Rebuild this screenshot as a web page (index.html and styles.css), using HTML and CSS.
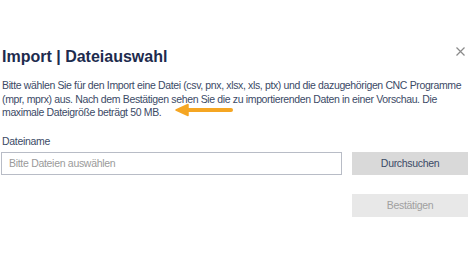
FILE: index.html
```html
<!DOCTYPE html>
<html lang="de">
<head>
<meta charset="utf-8">
<link rel="stylesheet" href="styles.css">
</head>
<body>
<div class="dialog">
  <div class="header">
    <h1 class="title">Import | Dateiauswahl</h1>
    <button class="close" aria-label="Schließen">
      <svg width="9" height="9" viewBox="0 0 9 9"><path d="M0.5 0.5L8.5 8.5M8.5 0.5L0.5 8.5" stroke="#8a8a8a" stroke-width="1.2" fill="none"/></svg>
    </button>
  </div>
  <p class="desc">Bitte wählen Sie für den Import eine Datei (csv, pnx, xlsx, xls, ptx) und die dazugehörigen CNC Programme (mpr, mprx) aus. Nach dem Bestätigen sehen Sie die zu importierenden Daten in einer Vorschau. Die maximale Dateigröße beträgt 50 MB.<span class="arrow"><svg width="60" height="14" viewBox="0 0 60 14"><path d="M56 7H10" stroke="#f5a623" stroke-width="4" stroke-linecap="round"/><path d="M1 7L13 1.5V12.5Z" fill="#f5a623" stroke="#f5a623" stroke-width="1.5" stroke-linejoin="round"/></svg></span></p>
  <label class="label" for="file">Dateiname</label>
  <div class="row">
    <input id="file" class="input" type="text" placeholder="Bitte Dateien auswählen">
    <button class="btn">Durchsuchen</button>
  </div>
  <div class="actions">
    <button class="btn disabled">Bestätigen</button>
  </div>
</div>
</body>
</html>
```
FILE: styles.css
```css
html, body {
  margin: 0;
  padding: 0;
  background: #ffffff;
}
body {
  font-family: "Liberation Sans", Arial, sans-serif;
  width: 470px;
  height: 264px;
  overflow: hidden;
}
.dialog {
  padding: 45px 2px 0 1px;
}
.header {
  display: flex;
  justify-content: space-between;
  align-items: flex-start;
}
.title {
  margin: 2px 0 0 1px;
  font-size: 16px;
  font-weight: bold;
  color: #1d2b4e;
  line-height: 20px;
}
.close {
  border: 0;
  background: none;
  padding: 0;
  margin: 2px 3px 0 0;
  width: 9px;
  height: 9px;
  display: flex;
}
.desc {
  margin: 12px 0 0 1px;
  font-size: 10.5px;
  line-height: 13.5px;
  letter-spacing: -0.36px;
  color: #3b4a66;
}
.arrow {
  position: relative;
}
.arrow svg {
  position: absolute;
  left: 14px;
  top: -3px;
}
.label {
  display: block;
  margin: 14px 0 0 1px;
  font-size: 10.5px;
  line-height: 14px;
  letter-spacing: -0.3px;
  color: #3b4a66;
}
.row {
  display: flex;
  gap: 10px;
  margin-top: 4px;
}
.input {
  box-sizing: border-box;
  width: 342px;
  height: 23px;
  border: 1px solid #b8bcc6;
  padding: 0 7px;
  font-family: inherit;
  font-size: 10.5px;
  letter-spacing: -0.3px;
  color: #333;
  margin: 0;
  outline: none;
}
.input::placeholder {
  color: #9a9a9a;
}
.btn {
  box-sizing: border-box;
  width: 116px;
  height: 23px;
  border: 0;
  background: #d9d9d9;
  color: #3b4a66;
  font-family: inherit;
  font-size: 10.5px;
  letter-spacing: -0.3px;
  padding: 0;
  margin: 0;
}
.actions {
  display: flex;
  justify-content: flex-end;
  margin-top: 19px;
}
.btn.disabled {
  background: #e8e8e8;
  color: #a0a0a0;
}
```
